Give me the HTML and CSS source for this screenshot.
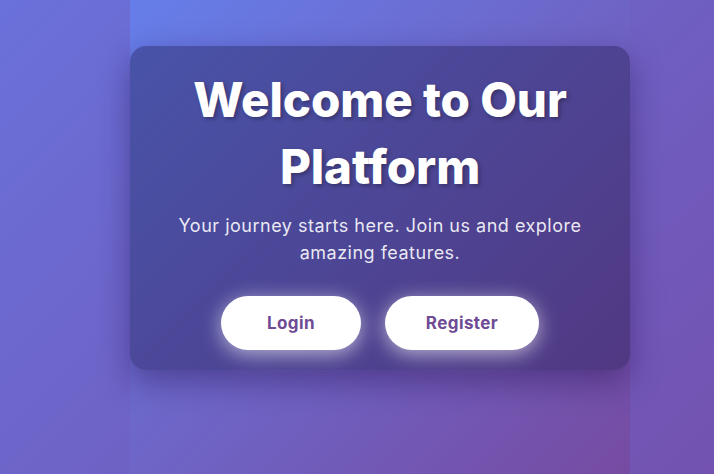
FILE: index.html
```html
<!DOCTYPE html>
<html lang="en">
<head>
<meta charset="utf-8">
<title>Welcome</title>
<link rel="stylesheet" href="styles.css">
</head>
<body>
<div class="page">
  <section class="card">
    <h1 class="title">Welcome to Our Platform</h1>
    <p class="lead">Your journey starts here. Join us and explore amazing features.</p>
    <div class="actions">
      <a class="btn btn-login" href="#">Login</a>
      <a class="btn btn-register" href="#">Register</a>
    </div>
  </section>
</div>
</body>
</html>
```
FILE: styles.css
```css
html, body {
  margin: 0;
  padding: 0;
  height: 100%;
}
body {
  background: linear-gradient(135deg, #6a71da 0%, #7352b0 100%);
  font-family: "Inter", "Open Sans", sans-serif;
  overflow: hidden;
}
.page {
  width: 500px;
  height: 100%;
  margin: 0 0 0 130px;
  padding-top: 46px;
  box-sizing: border-box;
  background: linear-gradient(135deg, #667eea 0%, #764ba2 100%);
}
.card {
  background: rgba(20, 15, 60, 0.36);
  border-radius: 16px;
  padding: 20px 30px 20px;
  text-align: center;
  box-shadow: 0 12px 32px rgba(30, 10, 70, 0.4);
}
.title {
  margin: 0 0 12px;
  font-size: 47.5px;
  line-height: 67px;
  font-weight: 800;
  color: #fff;
  letter-spacing: -0.1px;
  text-shadow: 2px 2px 4px rgba(0, 0, 0, 0.3);
}
.lead {
  margin: 0 0 30px;
  font-size: 18px;
  line-height: 27px;
  letter-spacing: 0.5px;
  color: rgba(255, 255, 255, 0.9);
}
.actions {
  display: flex;
  justify-content: center;
  gap: 24px;
}
.btn {
  display: block;
  height: 54px;
  line-height: 54px;
  border-radius: 27px;
  background: #fff;
  color: #6f4b95;
  font-weight: 700;
  font-size: 17px;
  letter-spacing: 0.4px;
  text-decoration: none;
  box-shadow: 0 4px 20px rgba(255, 255, 255, 0.6);
}
.btn-login { width: 140px; }
.btn-register { width: 154px; }
```
